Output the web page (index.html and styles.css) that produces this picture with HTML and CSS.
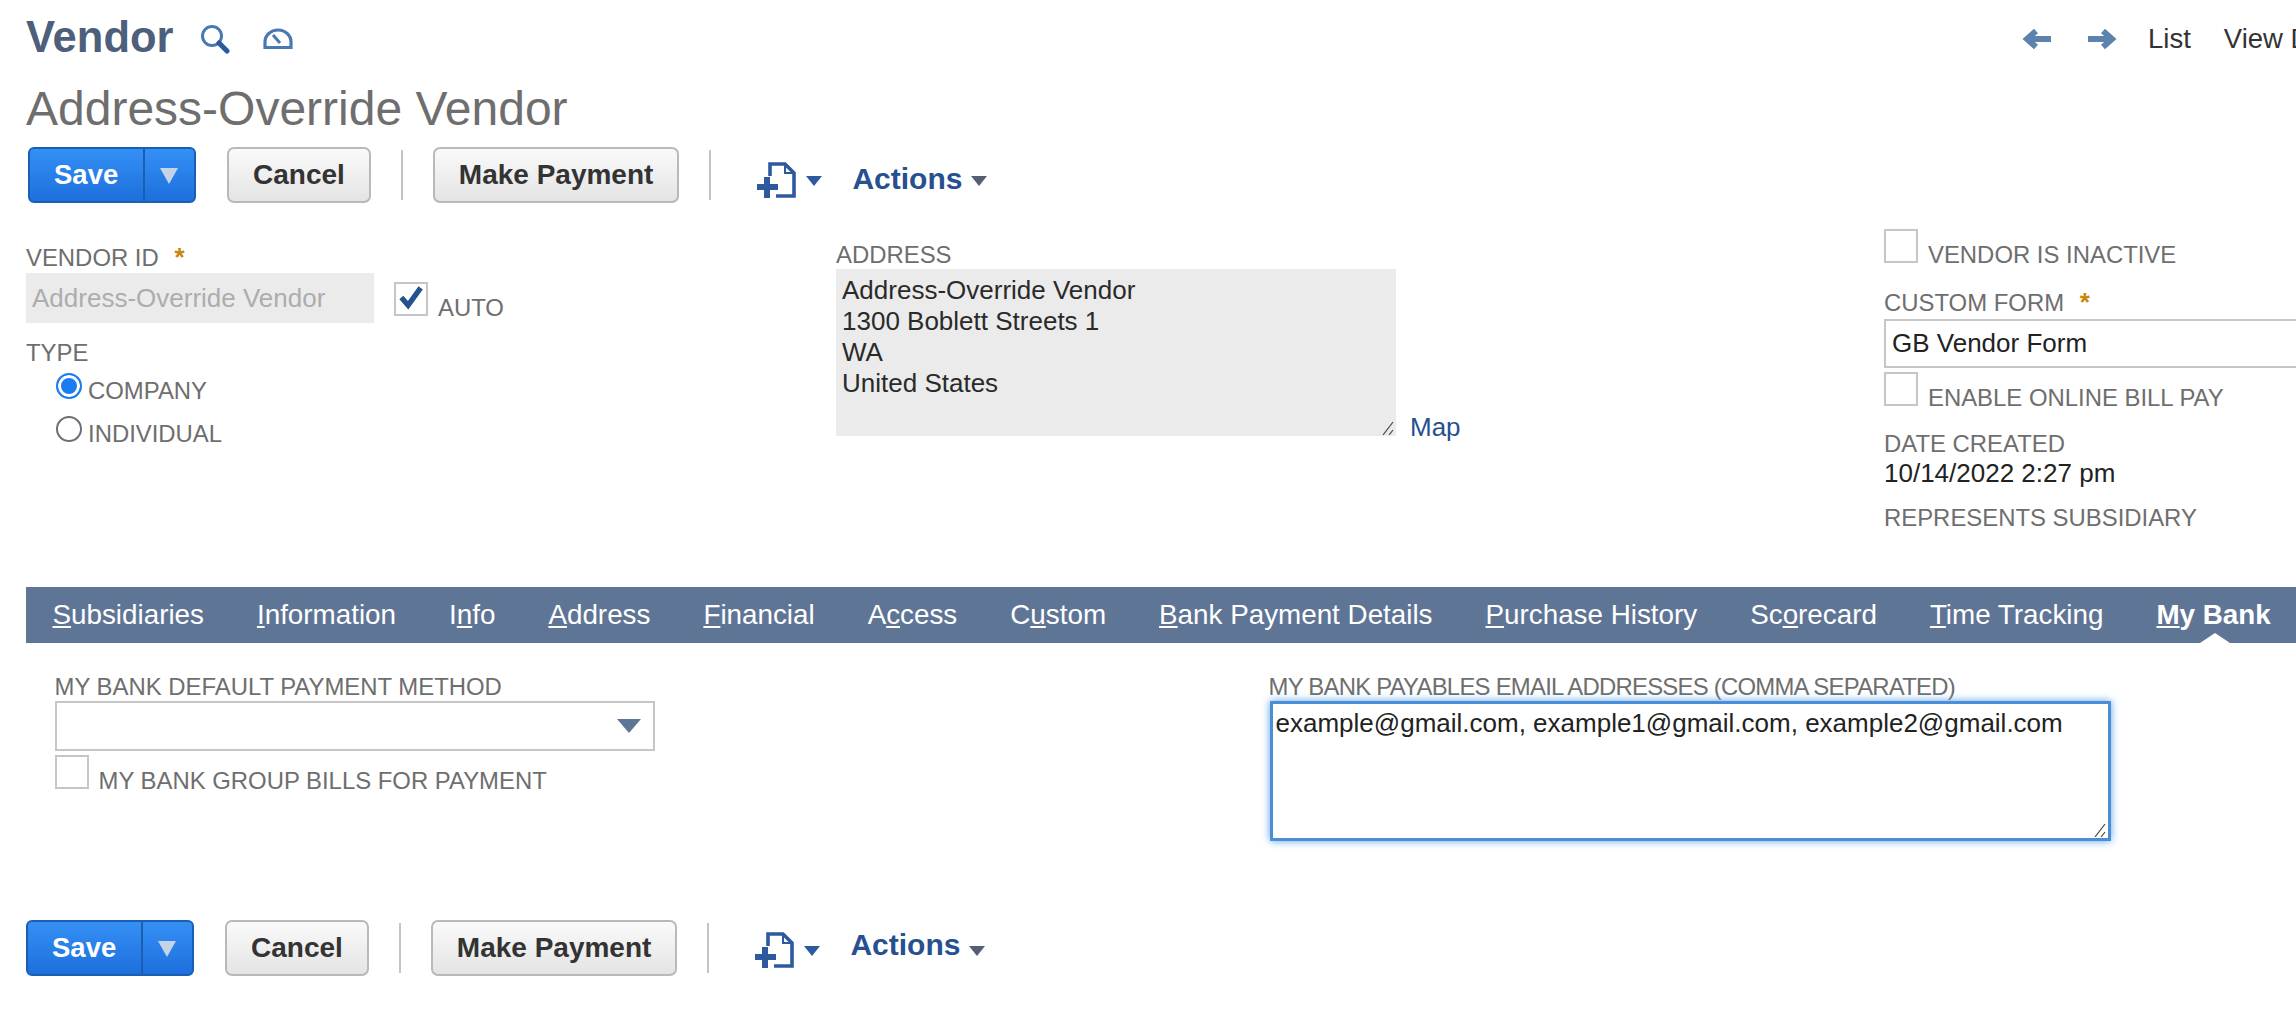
FILE: index.html
```html
<!DOCTYPE html>
<html lang="en">
<head>
    <meta charset="UTF-8">
    <title>Vendor - Address-Override Vendor</title>
    <link rel="stylesheet" href="styles.css">
</head>
<body>
    <div class="page">
        <div class="page-head">
            <div class="page-type">Vendor</div>
            <svg class="icon-search" viewBox="0 0 30 30"><circle cx="12" cy="12" r="9.5" fill="none" stroke="#4a78b4" stroke-width="3"/><path d="M19 19l8 8" stroke="#2a5a9e" stroke-width="5" stroke-linecap="round"/></svg>
            <svg class="icon-gauge" viewBox="0 0 30 21"><path d="M2 19.5V14a13 12 0 0 1 26 0v5.500z" fill="none" stroke="#4a78b4" stroke-width="3.200"/><path d="M10 7l7 8" stroke="#4a78b4" stroke-width="3"/></svg>
            <div class="page-nav">
                <svg class="nav-arrow" viewBox="0 0 30 20"><path d="M29 10H6M14 2l-9 8 9 8" fill="none" stroke="#5b83ad" stroke-width="6"/></svg>
                <svg class="nav-arrow" viewBox="0 0 30 20"><path d="M1 10h23M16 2l9 8-9 8" fill="none" stroke="#5b83ad" stroke-width="6"/></svg>
                <span class="nav-link nav-list">List</span>
                <span class="nav-link">View Dashboard</span>
            </div>
        </div>
        <h1 class="record-name">Address-Override Vendor</h1>

        <div class="toolbar toolbar-top">
            <div class="btn-save"><span class="btn-save-label">Save</span><span class="btn-save-menu"></span></div>
            <div class="btn">Cancel</div>
            <div class="btn-sep"></div>
            <div class="btn">Make Payment</div>
            <div class="btn-sep"></div>
            <svg class="icon-new" viewBox="0 0 40 36"><path d="M13 14V2h15l9 9v23H19" fill="none" stroke="#2d5a9e" stroke-width="3.600"/><path d="M28 2v9h9" fill="none" stroke="#2d5a9e" stroke-width="2"/><path d="M10 15v21M0 25h21" stroke="#2d5a9e" stroke-width="6"/></svg>
            <span class="caret caret-blue"></span>
            <span class="actions">Actions</span>
            <span class="caret caret-grey"></span>
        </div>

        <div class="main-fields">
            <div class="col col-left">
                <div class="label">VENDOR ID <span class="req">*</span></div>
                <div class="id-row">
                    <div class="input-disabled">Address-Override Vendor</div>
                    <div class="check-row auto-row">
                        <div class="checkbox"><svg class="tick" viewBox="0 0 30 28"><path d="M5 14l7 8L25 4" fill="none" stroke="#24518f" stroke-width="5.500"/></svg></div>
                        <div class="label">AUTO</div>
                    </div>
                </div>
                <div class="label type-label">TYPE</div>
                <div class="radio-row"><div class="radio radio-on"></div><div class="label">COMPANY</div></div>
                <div class="radio-row"><div class="radio"></div><div class="label">INDIVIDUAL</div></div>
            </div>

            <div class="col col-mid">
                <div class="label">ADDRESS</div>
                <div class="address-row">
                    <div class="address-box">
                        <div>Address-Override Vendor</div>
                        <div>1300 Boblett Streets 1</div>
                        <div>WA</div>
                        <div>United States</div>
                        <svg class="grip" viewBox="0 0 12 14"><path d="M1 14L11 1M7 14l4-5" stroke="#444" stroke-width="1.200"/></svg>
                    </div>
                    <span class="map-link">Map</span>
                </div>
            </div>

            <div class="col col-right">
                <div class="check-row">
                    <div class="checkbox"></div>
                    <div class="label">VENDOR IS INACTIVE</div>
                </div>
                <div class="label custom-label">CUSTOM FORM <span class="req">*</span></div>
                <div class="input-text">GB Vendor Form</div>
                <div class="check-row bill-row">
                    <div class="checkbox"></div>
                    <div class="label">ENABLE ONLINE BILL PAY</div>
                </div>
                <div class="label date-label">DATE CREATED</div>
                <div class="value">10/14/2022 2:27 pm</div>
                <div class="label subsidiary-label">REPRESENTS SUBSIDIARY</div>
            </div>
        </div>

        <div class="tabs">
            <span class="tab"><u>S</u>ubsidiaries</span>
            <span class="tab"><u>I</u>nformation</span>
            <span class="tab">I<u>n</u>fo</span>
            <span class="tab"><u>A</u>ddress</span>
            <span class="tab"><u>F</u>inancial</span>
            <span class="tab">A<u>c</u>cess</span>
            <span class="tab">C<u>u</u>stom</span>
            <span class="tab"><u>B</u>ank Payment Details</span>
            <span class="tab"><u>P</u>urchase History</span>
            <span class="tab">Sc<u>o</u>recard</span>
            <span class="tab"><u>T</u>ime Tracking</span>
            <span class="tab tab-active"><u>M</u>y Bank</span>
        </div>

        <div class="tab-body">
            <div class="bank-left">
                <div class="label">MY BANK DEFAULT PAYMENT METHOD</div>
                <div class="select"><span class="select-caret"></span></div>
                <div class="check-row group-row">
                    <div class="checkbox"></div>
                    <div class="label">MY BANK GROUP BILLS FOR PAYMENT</div>
                </div>
            </div>
            <div class="bank-right">
                <div class="label label-tight">MY BANK PAYABLES EMAIL ADDRESSES (COMMA SEPARATED)</div>
                <div class="email-box">
                    example@gmail.com, example1@gmail.com, example2@gmail.com
                    <svg class="grip" viewBox="0 0 12 14"><path d="M1 14L11 1M7 14l4-5" stroke="#444" stroke-width="1.200"/></svg>
                </div>
            </div>
        </div>

        <div class="toolbar toolbar-bottom">
            <div class="btn-save"><span class="btn-save-label">Save</span><span class="btn-save-menu"></span></div>
            <div class="btn">Cancel</div>
            <div class="btn-sep"></div>
            <div class="btn">Make Payment</div>
            <div class="btn-sep"></div>
            <svg class="icon-new" viewBox="0 0 40 36"><path d="M13 14V2h15l9 9v23H19" fill="none" stroke="#2d5a9e" stroke-width="3.600"/><path d="M28 2v9h9" fill="none" stroke="#2d5a9e" stroke-width="2"/><path d="M10 15v21M0 25h21" stroke="#2d5a9e" stroke-width="6"/></svg>
            <span class="caret caret-blue"></span>
            <span class="actions">Actions</span>
            <span class="caret caret-grey"></span>
        </div>
    </div>
</body>
</html>
```
FILE: styles.css
```css
html, body {
    margin: 0;
    padding: 0;
    background: #fff;
    overflow: hidden;
}
.page {
    width: 2296px;
    height: 1010px;
    overflow: hidden;
    font-family: "Liberation Sans", Arial, sans-serif;
    color: #222;
    box-sizing: border-box;
    padding-left: 26px;
}

/* page head */
.page-head {
    display: flex;
    align-items: flex-start;
    height: 50px;
    padding-top: 12px;
}
.page-type {
    font-size: 43.500px;
    line-height: 50px;
    font-weight: bold;
    color: #4d5f7a;
    width: 174px;
}
.icon-search {
    width: 30px;
    height: 30px;
    margin-top: 12px;
}
.icon-gauge {
    width: 30px;
    height: 21px;
    margin-top: 16px;
    margin-left: 33px;
}
.page-nav {
    margin-left: auto;
    flex: none;
    width: 274px;
    overflow: hidden;
    display: flex;
    align-items: center;
    white-space: nowrap;
    height: 50px;
    padding-top: 4px;
    box-sizing: border-box;
}
.nav-arrow {
    width: 30px;
    height: 20px;
    flex: none;
    margin-right: 35px;
}
.nav-link {
    font-size: 27.500px;
    color: #333;
    flex: none;
}
.nav-list {
    margin-left: -4px;
    margin-right: 33px;
}
.record-name {
    margin: 20px 0 0;
    font-size: 48px;
    line-height: 54px;
    font-weight: normal;
    color: #6e6e6e;
}

/* buttons */
.toolbar {
    display: flex;
    align-items: flex-start;
    height: 56px;
}
.toolbar-top {
    margin-top: 11px;
    padding-left: 2px;
}
.toolbar-bottom {
    margin-top: 79px;
}
.btn-save {
    display: flex;
    width: 168px;
    height: 56px;
    box-sizing: border-box;
    border: 2px solid #1a5fb4;
    border-radius: 6px;
    background: linear-gradient(#3490f5, #1e6fdc);
    color: #fff;
    font-size: 27.500px;
    font-weight: bold;
    line-height: 52px;
}
.btn-save-label {
    width: 115px;
    padding-left: 24px;
    box-sizing: border-box;
    border-right: 2px solid #1a5fb4;
}
.btn-save-menu {
    flex: 1;
    position: relative;
}
.btn-save-menu::after {
    content: "";
    position: absolute;
    left: 15px;
    top: 19px;
    border-left: 9px solid transparent;
    border-right: 9px solid transparent;
    border-top: 16px solid #c4d3e8;
}
.btn {
    height: 56px;
    box-sizing: border-box;
    padding: 0 24px;
    border: 2px solid #b9b9b9;
    border-radius: 7px;
    background: linear-gradient(#fafafa, #e4e4e4);
    color: #333;
    font-size: 28px;
    font-weight: bold;
    line-height: 52px;
    margin-left: 31px;
}
.btn-sep {
    width: 2px;
    height: 50px;
    margin: 3px 0 0 30px;
    background: #c4c4c4;
}
.btn-sep + .btn {
    margin-left: 30px;
}
.icon-new {
    width: 40px;
    height: 36px;
    margin: 15px 0 0 46px;
}
.toolbar-bottom .icon-new {
    margin-top: 12px;
}
.caret {
    width: 0;
    height: 0;
    margin-top: 29px;
    border-left: 8px solid transparent;
    border-right: 8px solid transparent;
    border-top: 10px solid #2d5a9e;
}
.caret-blue {
    margin-left: 9px;
}
.caret-grey {
    margin-left: 9px;
    border-top-color: #555f73;
}
.actions {
    margin-left: 30px;
    margin-top: 15px;
    font-size: 30px;
    line-height: 34px;
    font-weight: bold;
    color: #26508f;
}
.toolbar-bottom .actions {
    margin-top: 8px;
}
.toolbar-bottom .caret {
    margin-top: 26px;
}

/* form */
.label {
    font-size: 23.900px;
    line-height: 28px;
    color: #6e6e6e;
    white-space: nowrap;
}
.label-tight {
    letter-spacing: -0.75px;
}
.req {
    color: #c8860a;
    font-size: 26px;
    font-weight: bold;
    margin-left: 9px;
}
.main-fields {
    display: flex;
    margin-top: 11px;
}
.col {
    flex: none;
}
.col-left {
    width: 810px;
    padding-top: 29px;
}
.col-mid {
    width: 1048px;
    padding-top: 27px;
}
.col-right {
    width: 412px;
    margin-right: -300px;
    padding-top: 15px;
}
.input-disabled {
    width: 348px;
    height: 50px;
    box-sizing: border-box;
    background: #ebebeb;
    color: #adadad;
    font-size: 26px;
    line-height: 50px;
    padding-left: 6px;
    white-space: nowrap;
    overflow: hidden;
}
.id-row {
    display: flex;
    margin-top: 1px;
}
.check-row {
    display: flex;
    align-items: baseline;
    gap: 10px;
}
.checkbox {
    width: 34px;
    height: 34px;
    box-sizing: border-box;
    border: 2px solid #c6c6c6;
    flex: none;
}
.tick {
    display: block;
    width: 30px;
    height: 27px;
}
.auto-row {
    margin: 9px 0 0 20px;
}
.type-label {
    margin-top: 16px;
}
.radio-row {
    display: flex;
    align-items: baseline;
    gap: 6px;
    margin: 11px 0 0 30px;
}
.type-label + .radio-row {
    margin-top: 6px;
}
.radio {
    width: 26px;
    height: 26px;
    box-sizing: border-box;
    border: 2px solid #6e6e6e;
    border-radius: 50%;
    flex: none;
}
.radio-on {
    border-color: #1a7cf0;
    background: #1a7cf0;
    box-shadow: inset 0 0 0 3px #fff;
}
.address-row {
    display: flex;
    align-items: flex-end;
    gap: 15px;
}
.address-box {
    position: relative;
    width: 560px;
    height: 167px;
    box-sizing: border-box;
    padding: 6px 6px 0;
    background: #ebebeb;
    font-size: 26px;
    line-height: 31px;
    color: #2a2a2a;
}
.grip {
    position: absolute;
    right: 2px;
    bottom: 1px;
    width: 12px;
    height: 14px;
}
.map-link {
    font-size: 26px;
    line-height: 31px;
    margin-bottom: -7px;
    margin-left: -1px;
    color: #26508f;
}
.custom-label {
    margin-top: 19px;
}
.input-text {
    width: 600px;
    height: 49px;
    margin-top: 2px;
    box-sizing: border-box;
    border: 2px solid #c6c6c6;
    font-size: 26px;
    line-height: 45px;
    padding-left: 6px;
    color: #222;
}
.bill-row {
    margin-top: 4px;
}
.date-label {
    margin-top: 18px;
}
.value {
    margin-top: 2px;
    font-size: 26px;
    line-height: 26px;
    color: #222;
}
.subsidiary-label {
    margin-top: 18px;
}

/* tabs */
.tabs {
    display: flex;
    align-items: center;
    gap: 53px;
    height: 56px;
    margin-top: 55px;
    padding-left: 26.500px;
    background: #5f7596;
    white-space: nowrap;
}
.tab {
    position: relative;
    font-size: 27.800px;
    color: #fff;
    line-height: 56px;
}
.tab-active {
    font-weight: bold;
}
.tab-active::after {
    content: "";
    position: absolute;
    left: 44px;
    bottom: 0;
    border-left: 15px solid transparent;
    border-right: 15px solid transparent;
    border-bottom: 10px solid #fff;
}
.tab-body {
    display: flex;
    margin-top: 30px;
}
.bank-left {
    flex: 0 0 1242.500px;
    padding-left: 28.500px;
    box-sizing: border-box;
}
.bank-right {
    flex: none;
}
.select {
    position: relative;
    width: 600px;
    height: 50px;
    box-sizing: border-box;
    border: 2px solid #c6c6c6;
}
.select-caret {
    position: absolute;
    right: 12px;
    top: 16px;
    border-left: 12px solid transparent;
    border-right: 12px solid transparent;
    border-top: 14px solid #5f7596;
}
.group-row {
    margin-top: 4px;
}
.email-box {
    position: relative;
    width: 841px;
    height: 140px;
    margin-left: 1px;
    box-sizing: border-box;
    border: 3px solid #4a8fd6;
    box-shadow: 0 0 8px #5aa0e8;
    padding: 4px 3px 0;
    font-size: 26px;
    line-height: 31px;
    color: #222;
}
```
